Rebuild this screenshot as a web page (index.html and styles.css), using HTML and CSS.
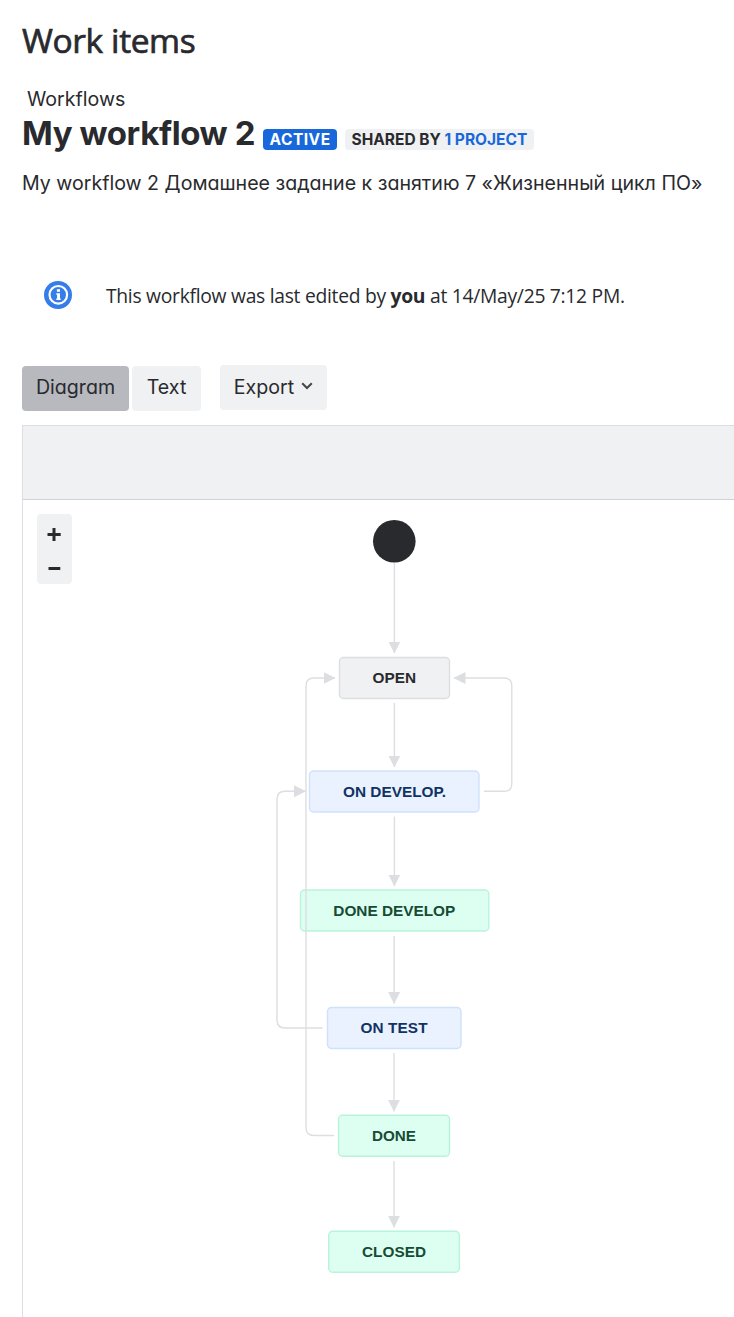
FILE: index.html
```html
<!DOCTYPE html>
<html lang="en">
<head>
<meta charset="utf-8">
<title>Work items</title>
<link rel="stylesheet" href="styles.css">
</head>
<body>
<header class="page-title"><span>Work items</span></header>
<main class="content">
  <a class="crumb">Workflows</a>
  <div class="heading">
    <h1 class="name">My workflow 2</h1>
    <span class="tag tag-active"><span>ACTIVE</span></span>
    <span class="tag tag-shared"><span>SHARED BY <a class="project">1 PROJECT</a></span></span>
  </div>
  <p class="description">My workflow 2 Домашнее задание к занятию 7 «Жизненный цикл ПО»</p>
  <div class="message">
    <svg class="info" width="28" height="28" viewBox="0 0 28 28">
      <circle cx="14" cy="14" r="14" fill="#357de8"/>
      <circle cx="14.300" cy="13.800" r="8.800" fill="none" stroke="#fff" stroke-width="2.200"/>
      <path d="M12.900 8.300h3.100v2.500h-3.100zM12.300 12.200h3.700v5.300h.7v1.600h-4.400v-1.600h.8v-3.700h-.8z" fill="#fff"/>
    </svg>
    <p class="message-text">This workflow was last edited by <b>you</b> at 14/May/25 7:12 PM.</p>
  </div>
  <div class="toolbar">
    <button class="btn selected"><span>Diagram</span></button>
    <button class="btn text-btn"><span>Text</span></button>
    <button class="btn export"><span>Export</span>
      <svg class="chevron" width="12" height="8" viewBox="0 0 12 8"><path d="M1.200 1.200 6 6l4.800-4.800" fill="none" stroke="#44464b" stroke-width="2"/></svg>
    </button>
  </div>
  <section class="designer">
    <div class="designer-bar"></div>
    <div class="canvas">
      <svg class="diagram" width="711" height="817" viewBox="23 500 711 817">
        <defs>
          <marker id="arrow" viewBox="0 0 12 12" markerWidth="12" markerHeight="12" refX="11.500" refY="6" orient="auto" markerUnits="userSpaceOnUse">
            <path d="M0 0 12 6 0 12z" fill="#dddee1"/>
          </marker>
        </defs>
        <circle cx="394.300" cy="541.300" r="21.300" fill="#292a2e"/>
        <g class="nodes">
          <rect class="node todo" x="339.500" y="657.500" width="110" height="41" rx="4"/>
          <rect class="node progress" x="309.500" y="771" width="169.500" height="41" rx="4"/>
          <rect class="node done" x="300.500" y="890" width="188.300" height="41" rx="4"/>
          <rect class="node progress" x="327.500" y="1007.500" width="133.500" height="41" rx="4"/>
          <rect class="node done" x="338.500" y="1115.300" width="111" height="41" rx="4"/>
          <rect class="node done" x="328.700" y="1231.300" width="130.700" height="41" rx="4"/>
        </g>
        <g class="edges">
          <path d="M394.400 563V653"/>
          <path d="M394.400 703V767"/>
          <path d="M394.400 816.500V886"/>
          <path d="M394.100 936V1003.500"/>
          <path d="M394 1053V1111.300"/>
          <path d="M394 1161V1227.300"/>
          <path d="M484 791.300H504Q511.800 791.300 511.800 783.500V686Q511.800 678 504 678H454"/>
          <path d="M322.500 1028H285Q277 1028 277 1020V799.300Q277 791.300 285 791.300H305.500"/>
          <path d="M334 1135.500H314Q306 1135.500 306 1127.500V686Q306 678 314 678H335"/>
        </g>
        <g class="labels">
          <text class="ink" x="372.500" y="683" textLength="43.500" lengthAdjust="spacingAndGlyphs">OPEN</text>
          <text class="navy" x="343" y="797" textLength="103" lengthAdjust="spacingAndGlyphs">ON DEVELOP.</text>
          <text class="green" x="333.300" y="916" textLength="122" lengthAdjust="spacingAndGlyphs">DONE DEVELOP</text>
          <text class="navy" x="360.500" y="1033" textLength="67">ON TEST</text>
          <text class="green" x="372" y="1141" textLength="44" lengthAdjust="spacingAndGlyphs">DONE</text>
          <text class="green" x="362" y="1257" textLength="64">CLOSED</text>
        </g>
      </svg>
      <div class="zoom">
        <svg width="35" height="70" viewBox="0 0 35 70"><path d="M10.500 20.500H23.700M17 14V27M11.500 54.500H23.300" fill="none" stroke="#292a2e" stroke-width="3"/></svg>
      </div>
    </div>
  </section>
</main>
</body>
</html>
```
FILE: styles.css
```css
* { box-sizing: border-box; }
body {
  margin: 0;
  height: 1317px;
  padding-left: 22px;
  overflow: hidden;
  background: #fff;
  color: #292a2e;
  font: 19.600px/24px Inter, "Liberation Sans", sans-serif;
  font-feature-settings: "cv11";
  white-space: nowrap;
}
.page-title {
  height: 84px;
  padding-top: 19px;
  font: 500 33.500px/42px "Open Sans", sans-serif;
  letter-spacing: -0.400px;
  -webkit-text-stroke: 0.700px #292a2e;
}
.content { display: flex; flex-direction: column; }
.crumb { height: 30px; padding: 3px 0 0 5px; }
.heading { display: flex; height: 40px; }
.name {
  width: 241px;
  margin: 0;
  font-size: 33px;
  font-weight: 650;
  line-height: 39px;
  letter-spacing: -0.400px;
}
.tag {
  height: 21px;
  margin-top: 15px;
  padding-left: 6.500px;
  border-radius: 4px;
  font-size: 15.500px;
  font-weight: 700;
  line-height: 21px;
}
.tag-active { width: 74px; margin-right: 8px; background: #1868db; color: #fff; letter-spacing: 0.500px; }
.tag-shared { width: 189px; background: #f0f1f2; font-weight: 650; }
.project { color: #1868db; }
.description { margin: 17px 0 0; height: 24px; }
.message {
  display: flex;
  align-items: center;
  height: 50px;
  margin-top: 75px;
  padding-left: 22px;
  gap: 34px;
}
.message-text { margin: 0; padding-top: 2px; font: 19.300px/26px "Open Sans", sans-serif; letter-spacing: -0.285px; }
.toolbar { display: flex; height: 46px; margin-top: 45px; }
.btn {
  display: flex;
  align-items: center;
  justify-content: center;
  width: 107px;
  height: 45px;
  padding: 0 0 3px;
  border: 0;
  border-radius: 4px;
  background: #f0f1f2;
  color: inherit;
  font: inherit;
  font-feature-settings: inherit;
}
.selected { margin: 1px 3px 0 0; background: #b7b9be; }
.text-btn { width: 69px; margin: 1px 19px 0 0; }
.export { gap: 7px; padding-bottom: 1px; }
.chevron { margin-bottom: 2px; }
.designer { margin-top: 14px; border: solid #dddee1; border-width: 1px 0 0 1px; }
.designer-bar { height: 74px; background: #f0f1f2; border-bottom: 1px solid #cfd1d4; }
.canvas { position: relative; height: 817px; }
.diagram { display: block; }
.zoom {
  position: absolute;
  left: 14px;
  top: 14px;
  width: 35px;
  height: 70px;
  border-radius: 4px;
  background: #f0f1f2;
}
.node { stroke-width: 1.400; }
.todo { fill: #f0f1f2; stroke: #dddee1; }
.progress { fill: #e9f2fe; stroke: #cfe1fd; }
.done { fill: #dcfff1; stroke: #baf3db; }
.edges path { fill: none; stroke: #dddee1; stroke-width: 1.400; marker-end: url(#arrow); }
.labels { font: bold 15.300px "Liberation Sans", Arial, sans-serif; }
.ink { fill: #292a2e; }
.navy { fill: #123263; }
.green { fill: #164b35; }
```
